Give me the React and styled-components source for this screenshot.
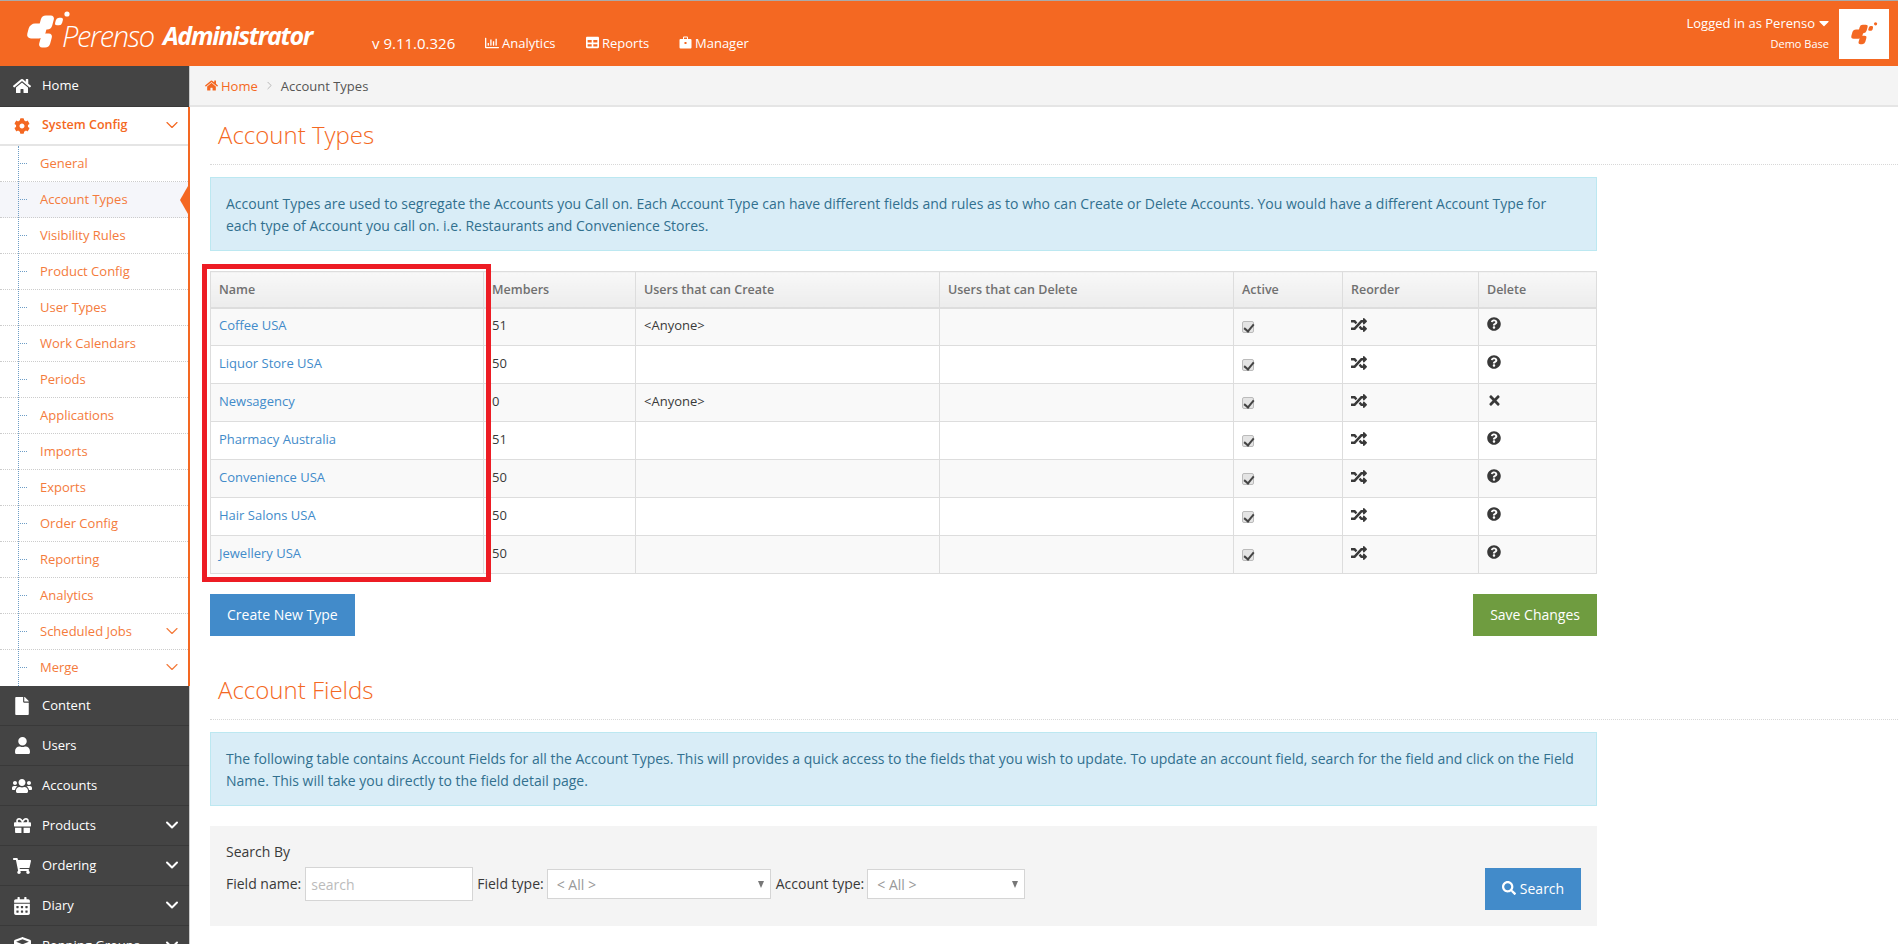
import styled, { createGlobalStyle } from "styled-components";
import { ChevronDown, ChevronRight } from "lucide-react";
import {
  FaHome,
  FaCog,
  FaFile,
  FaUser,
  FaUsers,
  FaGift,
  FaShoppingCart,
  FaCalendarAlt,
  FaCube,
  FaRegChartBar,
  FaTable,
  FaRandom,
  FaQuestionCircle,
  FaTimes,
  FaSearch,
  FaCaretDown,
} from "react-icons/fa";

const subItems = [
  { label: "General" },
  { label: "Account Types", active: true },
  { label: "Visibility Rules" },
  { label: "Product Config" },
  { label: "User Types" },
  { label: "Work Calendars" },
  { label: "Periods" },
  { label: "Applications" },
  { label: "Imports" },
  { label: "Exports" },
  { label: "Order Config" },
  { label: "Reporting" },
  { label: "Analytics" },
  { label: "Scheduled Jobs", more: true },
  { label: "Merge", more: true },
];

const lowerItems = [
  { label: "Content", icon: FaFile, size: 18 },
  { label: "Users", icon: FaUser, size: 17 },
  { label: "Accounts", icon: FaUsers, size: 20 },
  { label: "Products", icon: FaGift, size: 17, more: true },
  { label: "Ordering", icon: FaShoppingCart, size: 18, more: true },
  { label: "Diary", icon: FaCalendarAlt, size: 18, more: true },
  { label: "Popping Groups", icon: FaCube, size: 17, more: true },
];

const rows = [
  { name: "Coffee USA", members: 51, create: "<Anyone>" },
  { name: "Liquor Store USA", members: 50 },
  { name: "Newsagency", members: 0, create: "<Anyone>", deletable: true },
  { name: "Pharmacy Australia", members: 51 },
  { name: "Convenience USA", members: 50 },
  { name: "Hair Salons USA", members: 50 },
  { name: "Jewellery USA", members: 50 },
];

const logoBlocks = [
  { cx: 12, cy: 20, w: 18, h: 15, r: 5 },
  { cx: 21.5, cy: 11.5, w: 13, h: 14, r: 4 },
  { cx: 34, cy: 10.5, w: 7, h: 7.5, r: 2.5 },
  { cx: 20.5, cy: 29.5, w: 11, h: 14, r: 4 },
];

function LogoMark({ width, color, className }) {
  return (
    <svg className={className} width={width} height={(width * 38) / 46} viewBox="0 0 46 38" fill={color}>
      {logoBlocks.map((b) => (
        <rect
          key={b.cx}
          x={-b.w / 2}
          y={-b.h / 2}
          width={b.w}
          height={b.h}
          rx={b.r}
          transform={`translate(${b.cx} ${b.cy}) skewX(-15)`}
        />
      ))}
      <circle cx="42" cy="3" r="2.6" />
    </svg>
  );
}

function BagIcon() {
  return (
    <svg width="13" height="13" viewBox="0 0 13 13" fill="#fff">
      <path d="M4 3V1.5Q4 .5 5 .5H8Q9 .5 9 1.5V3H8V1.5H5V3Z" />
      <path d="M.5 4Q.5 3 1.5 3H11.5Q12.5 3 12.5 4V11.5Q12.5 12.5 11.5 12.5H1.5Q.5 12.5 .5 11.5Z" />
      <rect x="5.5" y="6" width="2" height="2" fill="#f46822" />
    </svg>
  );
}

function App() {
  return (
    <>
      <GlobalStyle />
      <Header>
        <Logo>
          <HeaderMark width={46} color="#fff" />
          <LogoName>Perenso</LogoName>
          <LogoBold>Administrator</LogoBold>
        </Logo>
        <Version>v 9.11.0.326</Version>
        <TopLink $w={101}>
          <FaRegChartBar size={14} />
          Analytics
        </TopLink>
        <TopLink $w={93}>
          <FaTable size={13} />
          Reports
        </TopLink>
        <TopLink>
          <BagIcon />
          Manager
        </TopLink>
        <UserBlock>
          <UserName>
            Logged in as Perenso
            <FaCaretDown size={16} />
          </UserName>
          <BaseName>Demo Base</BaseName>
        </UserBlock>
        <Avatar>
          <LogoMark width={28} color="#f46822" />
        </Avatar>
      </Header>
      <Body>
        <Sidebar>
          <DarkItem>
            <NavIcon>
              <FaHome size={18} />
            </NavIcon>
            Home
          </DarkItem>
          <OpenGroup>
            <OpenHead>
              <NavIcon>
                <FaCog size={16} />
              </NavIcon>
              System Config
              <Chevron>
                <ChevronDown size={20} strokeWidth={1.4} />
              </Chevron>
            </OpenHead>
            <SubList>
              {subItems.map((item) => (
                <SubItem key={item.label} $active={item.active}>
                  {item.label}
                  {item.more && (
                    <Chevron>
                      <ChevronDown size={20} strokeWidth={1.4} />
                    </Chevron>
                  )}
                  {item.active && <ActiveArrow />}
                </SubItem>
              ))}
            </SubList>
          </OpenGroup>
          {lowerItems.map((item) => (
            <DarkItem key={item.label}>
              <NavIcon>
                <item.icon size={item.size} />
              </NavIcon>
              {item.label}
              {item.more && (
                <Chevron>
                  <ChevronDown size={20} strokeWidth={2.4} />
                </Chevron>
              )}
            </DarkItem>
          ))}
        </Sidebar>
        <Main>
          <Breadcrumb>
            <Crumb>
              <FaHome size={13} />
              Home
            </Crumb>
            <ChevronRight size={13} color="#aaa" strokeWidth={1.5} />
            <span>Account Types</span>
          </Breadcrumb>
          <Content>
            <Title>Account Types</Title>
            <Alert>
              Account Types are used to segregate the Accounts you Call on. Each Account Type can have
              different fields and rules as to who can Create or Delete Accounts. You would have a
              different Account Type for each type of Account you call on. i.e. Restaurants and
              Convenience Stores.
            </Alert>
            <TableWrap>
              <Table>
                <colgroup>
                  <col width="273" />
                  <col width="152" />
                  <col width="304" />
                  <col width="294" />
                  <col width="109" />
                  <col width="136" />
                  <col width="118" />
                </colgroup>
                <thead>
                  <tr>
                    <Th>Name</Th>
                    <Th>Members</Th>
                    <Th>Users that can Create</Th>
                    <Th>Users that can Delete</Th>
                    <Th>Active</Th>
                    <Th>Reorder</Th>
                    <Th>Delete</Th>
                  </tr>
                </thead>
                <tbody>
                  {rows.map((row) => (
                    <Tr key={row.name}>
                      <Td>
                        <NameLink>{row.name}</NameLink>
                      </Td>
                      <Td>{row.members}</Td>
                      <Td>{row.create}</Td>
                      <Td />
                      <Td>
                        <Check />
                      </Td>
                      <Td>
                        <FaRandom size={16} />
                      </Td>
                      <Td>
                        {row.deletable ? <FaTimes size={15} /> : <QuestionIcon size={14} />}
                      </Td>
                    </Tr>
                  ))}
                </tbody>
              </Table>
              <RedBox />
            </TableWrap>
            <ButtonRow>
              <Button $bg="#428bca">Create New Type</Button>
              <Button $bg="#6f9c40">Save Changes</Button>
            </ButtonRow>
            <Title $second>Account Fields</Title>
            <Alert>
              The following table contains Account Fields for all the Account Types. This will provides
              a quick access to the fields that you wish to update. To update an account field, search
              for the field and click on the Field Name. This will take you directly to the field detail
              page.
            </Alert>
            <SearchPanel>
              <SearchForm>
                <SearchTitle>Search By</SearchTitle>
                <FieldRow>
                  <FieldLabel>Field name:</FieldLabel>
                  <SearchInput placeholder="search" />
                  <FieldLabel>Field type:</FieldLabel>
                  <FakeSelect $w={224}>
                    &lt; All &gt;
                    <SelectArrow />
                  </FakeSelect>
                  <FieldLabel>Account type:</FieldLabel>
                  <FakeSelect $w={158}>
                    &lt; All &gt;
                    <SelectArrow />
                  </FakeSelect>
                </FieldRow>
              </SearchForm>
              <SearchButton $bg="#428bca">
                <FaSearch size={14} />
                Search
              </SearchButton>
            </SearchPanel>
          </Content>
        </Main>
      </Body>
    </>
  );
}

const GlobalStyle = createGlobalStyle`
  html, body {
    margin: 0;
    height: 944px;
    overflow: hidden;
    background: #fff;
    font-family: "Open Sans", "Liberation Sans", sans-serif;
    font-size: 13px;
    color: #393939;
  }
  * {
    box-sizing: border-box;
  }
`;

const Header = styled.header`
  height: 66px;
  background: #f46822;
  border-top: 1px solid #aaa;
  display: flex;
  align-items: center;
  color: #fff;
  padding-left: 24px;
`;
const Logo = styled.div`
  width: 348px;
  display: flex;
  align-items: center;
  margin-top: 3px;
`;
const HeaderMark = styled(LogoMark)`
  margin: -10px 0 0 1px;
  flex: none;
`;
const LogoName = styled.span`
  font-weight: 300;
  font-style: italic;
  font-size: 29px;
  letter-spacing: -1.3px;
  margin-left: -9px;
`;
const LogoBold = styled.span`
  font-weight: 700;
  font-style: italic;
  font-size: 25px;
  letter-spacing: -1.3px;
  margin-left: 9px;
`;
const Version = styled.span`
  width: 113px;
  font-size: 15px;
  margin-top: 18px;
`;
const TopLink = styled.span`
  width: ${(p) => (p.$w ? `${p.$w}px` : "auto")};
  display: flex;
  align-items: center;
  gap: 3px;
  font-size: 13px;
  margin-top: 18px;
`;
const UserBlock = styled.div`
  margin-left: auto;
  display: flex;
  flex-direction: column;
  align-items: flex-end;
  margin-right: 10px;
  margin-top: -2px;
`;
const UserName = styled.div`
  font-size: 13px;
  line-height: 18px;
  display: flex;
  align-items: center;
  gap: 1px;
  svg {
    margin-right: -3px;
  }
`;
const BaseName = styled.div`
  font-size: 11px;
  line-height: 16px;
  margin-top: 4px;
`;
const Avatar = styled.div`
  width: 50px;
  height: 50px;
  background: #fff;
  margin-right: 9px;
  display: flex;
  align-items: center;
  justify-content: center;
`;

const Body = styled.div`
  display: flex;
  height: 878px;
  overflow: hidden;
`;
const Sidebar = styled.nav`
  width: 190px;
  flex: none;
  background: #444;
  border-right: 1px solid #ccc;
`;
const DarkItem = styled.div`
  height: 40px;
  display: flex;
  align-items: center;
  color: #fff;
  background: #444;
  border-bottom: 1px solid #393939;
  font-size: 13px;
  padding: 0 7px 2px 0;
  &:first-child {
    height: 41px;
  }
`;
const NavIcon = styled.span`
  width: 42px;
  flex: none;
  display: flex;
  justify-content: center;
  padding: 2px 0 0 2px;
`;
const Chevron = styled.span`
  margin-left: auto;
  display: flex;
`;
const OpenGroup = styled.div`
  background: #fff;
  border-right: 2px solid #f46822;
  margin-right: -1px;
  color: #f46822;
`;
const OpenHead = styled.div`
  height: 39px;
  display: flex;
  align-items: center;
  font-weight: 600;
  font-size: 12.5px;
  padding: 0 6px 2px 0;
  border-bottom: 2px solid #e5e5e5;
`;
const SubList = styled.div`
  position: relative;
  &::before {
    content: "";
    position: absolute;
    z-index: 1;
    left: 18px;
    top: 0;
    bottom: 0;
    border-left: 1px dotted #6d9dc6;
  }
`;
const SubItem = styled.div`
  height: 36px;
  position: relative;
  display: flex;
  align-items: center;
  padding: 0 6px 2px 40px;
  font-size: 13px;
  color: #f47b3c;
  background: ${(p) => (p.$active ? "#f5f6fa" : "#fff")};
  border-bottom: 1px dotted #ccc;
  &:last-child {
    border-bottom: none;
  }
  &::before {
    content: "";
    position: absolute;
    left: 20px;
    top: 17px;
    width: 7px;
    border-top: 1px dotted #6d9dc6;
  }
`;
const ActiveArrow = styled.span`
  position: absolute;
  right: 0;
  top: 4px;
  width: 8px;
  height: 28px;
  background: #f46822;
  clip-path: polygon(100% 0, 100% 100%, 0 50%);
`;

const Main = styled.main`
  flex: 1;
  min-width: 0;
`;
const Breadcrumb = styled.div`
  height: 41px;
  background: #f4f4f4;
  border-bottom: 2px solid #e5e5e5;
  display: flex;
  align-items: center;
  gap: 5px;
  padding-left: 15px;
  font-size: 13px;
  color: #555;
`;
const Crumb = styled.span`
  display: flex;
  align-items: center;
  gap: 3px;
  color: #f46822;
`;
const Content = styled.div`
  padding-left: 20px;
`;
const Title = styled.h1`
  margin: ${(p) => (p.$second ? "32px" : "0")} 0 12px;
  height: ${(p) => (p.$second ? "52px" : "58px")};
  padding: ${(p) => (p.$second ? "5px" : "11px")} 0 0 8px;
  font-weight: 300;
  font-size: 24px;
  line-height: 33px;
  color: #f46822;
  border-bottom: 1px dotted #d8d8d8;
`;
const Alert = styled.div`
  width: 1387px;
  height: 74px;
  padding: 15px 20px 0 15px;
  line-height: 22px;
  font-size: 14px;
  color: #31708f;
  background: #d9edf7;
  border: 1px solid #bce8f1;
`;
const TableWrap = styled.div`
  position: relative;
  margin-top: 20px;
  width: 1387px;
`;
const Table = styled.table`
  border-collapse: collapse;
  table-layout: fixed;
  width: 1386px;
`;
const Th = styled.th`
  height: 36px;
  padding: 0 8px;
  text-align: left;
  font-weight: 600;
  font-size: 12.5px;
  color: #707070;
  background: linear-gradient(#f8f8f8, #ececec);
  border: 1px solid #ddd;
  border-bottom: 2px solid #ddd;
`;
const Tr = styled.tr`
  background: #fff;
  &:nth-child(odd) {
    background: #f9f9f9;
  }
`;
const Td = styled.td`
  height: 38px;
  padding: 0 8px 4px;
  border: 1px solid #ddd;
  font-size: 13px;
  color: #393939;
  svg {
    display: block;
  }
`;
const QuestionIcon = styled(FaQuestionCircle)`
  margin-top: -2px;
`;
const NameLink = styled.span`
  color: #428bca;
`;
const Check = styled.span`
  display: block;
  width: 12px;
  height: 12px;
  margin-top: 5px;
  border: 1px solid #bbb;
  border-radius: 2px;
  background: #e4e4e4;
  position: relative;
  &::after {
    content: "";
    position: absolute;
    left: 3px;
    top: 0;
    width: 4px;
    height: 8px;
    border: solid #444;
    border-width: 0 2px 2px 0;
    transform: rotate(40deg);
  }
`;
const RedBox = styled.div`
  position: absolute;
  left: -8px;
  top: -7px;
  width: 289px;
  height: 318px;
  border: 5px solid #ed1c24;
  pointer-events: none;
`;
const ButtonRow = styled.div`
  display: flex;
  justify-content: space-between;
  width: 1387px;
  margin-top: 20px;
`;
const Button = styled.button`
  height: 42px;
  padding: 0 17px 2px;
  border: none;
  background: ${(p) => p.$bg};
  color: #fff;
  font-family: inherit;
  font-size: 14px;
`;
const SearchPanel = styled.div`
  width: 1387px;
  height: 100px;
  margin-top: 20px;
  background: #f4f4f4;
  display: flex;
  justify-content: space-between;
  align-items: flex-end;
  padding: 0 16px 16px 16px;
`;
const SearchForm = styled.div`
  align-self: flex-start;
  padding-top: 16px;
`;
const SearchTitle = styled.div`
  font-size: 14px;
  line-height: 20px;
  margin-bottom: 5px;
`;
const FieldRow = styled.div`
  display: flex;
  align-items: center;
  gap: 3px;
`;
const FieldLabel = styled.label`
  font-size: 14px;
  padding-bottom: 2px;
  white-space: nowrap;
`;
const SearchInput = styled.input`
  width: 168px;
  height: 34px;
  margin: 0 1px;
  border: 1px solid #d5d5d5;
  padding: 0 5px;
  font-family: inherit;
  font-size: 14px;
  &::placeholder {
    color: #bbb;
  }
`;
const FakeSelect = styled.div`
  width: ${(p) => p.$w}px;
  height: 30px;
  margin-right: 2px;
  border: 1px solid #d5d5d5;
  background: #fff;
  color: #999;
  padding: 0 8px 0 9px;
  display: flex;
  align-items: center;
  justify-content: space-between;
  font-size: 14px;
`;
const SelectArrow = styled.span`
  width: 0;
  height: 0;
  border-left: 3px solid transparent;
  border-right: 3px solid transparent;
  border-top: 7px solid #777;
  margin-right: -2px;
`;
const SearchButton = styled(Button)`
  width: 96px;
  padding: 0 0 2px;
  display: flex;
  align-items: center;
  justify-content: center;
  gap: 4px;
`;

export default App;
